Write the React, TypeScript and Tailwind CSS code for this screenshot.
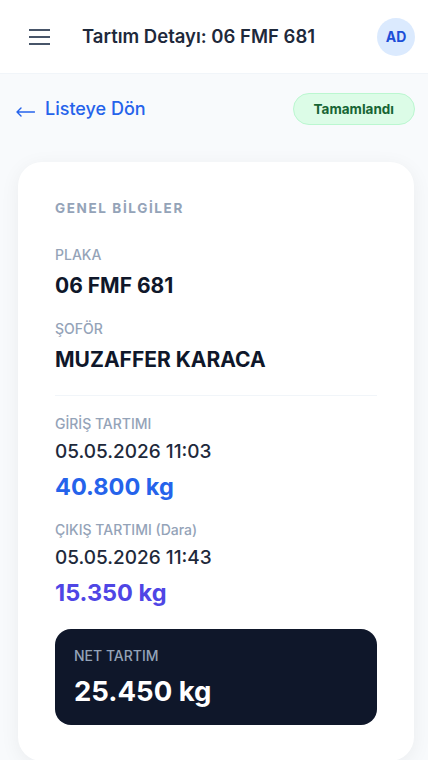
import React from 'react';

const Field = ({ label, value }: { label: string; value: string }) => (
  <div>
    <div className="text-sm leading-5 font-medium text-[#94a3b8]">{label}</div>
    <div className="mt-[7px] text-[21px] leading-7 font-bold text-[#0f172a]">{value}</div>
  </div>
);

const Weighing = ({ label, date, weight, color }: { label: string; date: string; weight: string; color: string }) => (
  <div>
    <div className="text-sm leading-5 font-medium text-[#94a3b8]">{label}</div>
    <div className="mt-1 text-[19px] leading-7 font-medium text-[#1e293b]">{date}</div>
    <div className={`mt-[5px] text-[23.5px] leading-8 font-bold ${color}`}>{weight}</div>
  </div>
);

export default function App() {
  return (
    <div className="min-h-[760px] bg-[#f8fafc] font-['Inter',sans-serif]">
      {/* Header */}
      <header className="h-[74px] bg-white border-b border-[#f1f5f9] flex items-center pl-[29px] pr-[13px]">
        <svg width="21" height="18" viewBox="0 0 21 18" className="text-[#475569]">
          <path d="M0 2h21M0 9h21M0 16h21" stroke="currentColor" strokeWidth="2" strokeLinecap="round" />
        </svg>
        <h1 className="ml-8 text-[18.5px] font-semibold text-[#1e293b]">Tartım Detayı: 06 FMF 681</h1>
        <div className="ml-auto w-[38px] h-[38px] rounded-full bg-[#dbeafe] flex items-center justify-center text-sm font-bold text-[#1d4ed8]">
          AD
        </div>
      </header>

      {/* Back + status */}
      <div className="pt-[19px] pl-4 pr-[13px] flex items-center justify-between">
        <a className="text-lg font-medium text-[#2563eb] flex items-center gap-[10px]">
          <svg width="19" height="10" viewBox="0 0 19 10" className="mt-1.5">
            <path d="M18.5 5H1M5 1L1 5l4 4" fill="none" stroke="currentColor" strokeWidth="1.4" strokeLinecap="round" strokeLinejoin="round" />
          </svg>
          <span>Listeye Dön</span>
        </a>
        <span className="px-5 py-[5px] rounded-full bg-[#dcfce7] border border-[#bbf7d0] text-[13.5px] leading-5 font-bold text-[#166534]">
          Tamamlandı
        </span>
      </div>

      {/* Card */}
      <div className="mt-[37px] ml-[18px] mr-[14px] bg-white rounded-3xl shadow-[0_4px_20px_rgba(15,23,42,0.06)] px-[37px] pt-9 pb-9">
        <div className="text-[13.5px] leading-5 font-bold tracking-[0.12em] text-[#94a3b8]">GENEL BİLGİLER</div>

        <div className="mt-[27px] flex flex-col gap-[19px]">
          <Field label="PLAKA" value="06 FMF 681" />
          <Field label="ŞOFÖR" value="MUZAFFER KARACA" />
        </div>

        <div className="mt-[21px] mb-[18px] h-px bg-[#f1f5f9]" />

        <div className="flex flex-col gap-[17px]">
          <Weighing label="GİRİŞ TARTIMI" date="05.05.2026 11:03" weight="40.800 kg" color="text-[#2563eb]" />
          <Weighing label="ÇIKIŞ TARTIMI (Dara)" date="05.05.2026 11:43" weight="15.350 kg" color="text-[#4f46e5]" />
        </div>

        <div className="mt-5 bg-[#0f172a] rounded-2xl px-[19px] pt-[17px] pb-4">
          <div className="text-sm leading-5 font-medium text-[#94a3b8]">NET TARTIM</div>
          <div className="mt-[7px] text-[27.5px] leading-9 font-bold text-white">25.450 kg</div>
        </div>
      </div>
    </div>
  );
}
